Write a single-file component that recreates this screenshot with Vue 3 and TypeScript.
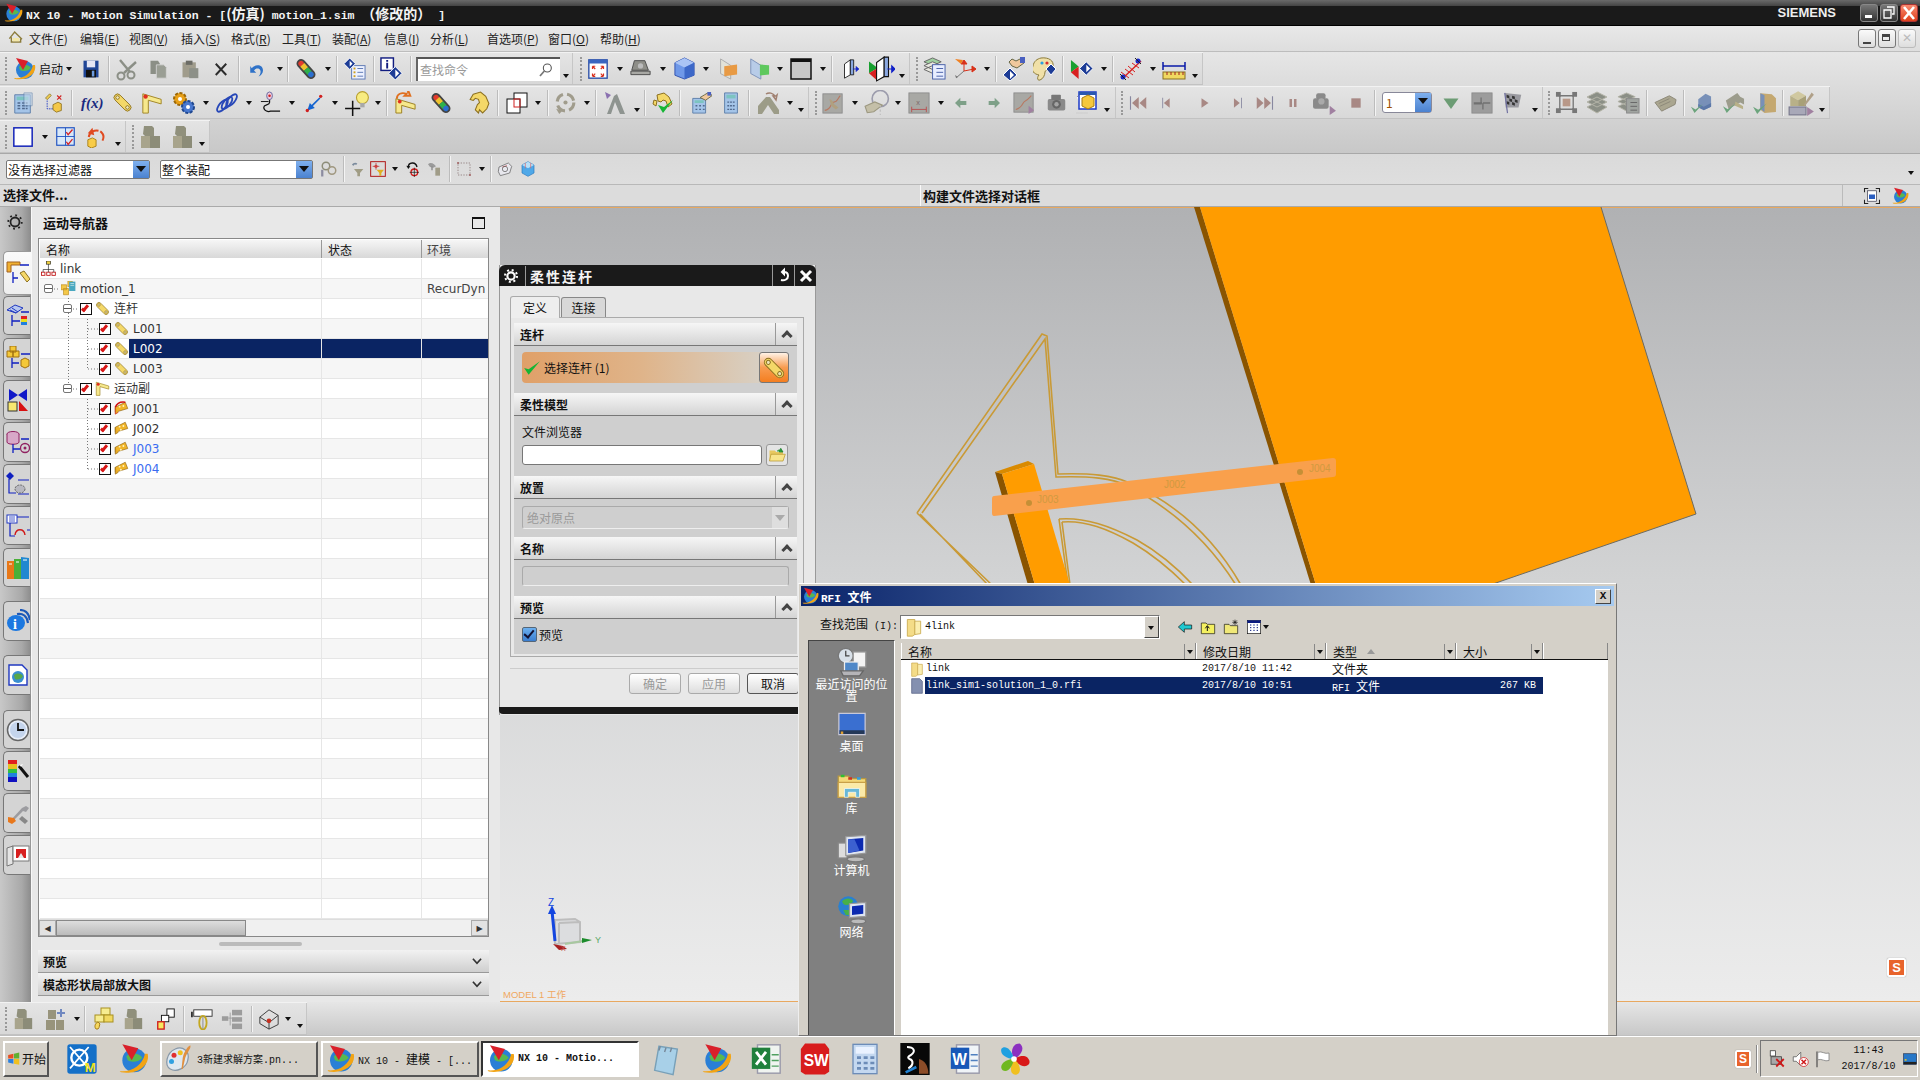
<template>
  <div class="nx">
    <!-- Title bar -->
    <header class="titlebar">
      <Ico n="nx" :s="20" class="title-logo" />
      <span class="title-text">NX 10 - Motion Simulation - [<span class="cj">(仿真)</span> motion_1.sim <span class="cj">（修改的）</span> ]</span>
      <span class="siemens">SIEMENS</span>
      <span class="win-btn">
        <svg viewBox="0 0 18 18" width="18" height="18"><rect x="5" y="11" width="7" height="3" fill="#fff" /></svg>
      </span>
      <span class="win-btn">
        <svg viewBox="0 0 18 18" width="18" height="18"><path d="M7 3h7v7h-2M4 6h7v8H4z" fill="none" stroke="#fff" stroke-width="1.300" /></svg>
      </span>
      <span class="win-btn win-close">
        <svg viewBox="0 0 18 18" width="18" height="18"><path d="M4 3l10 12M14 3L4 15" stroke="#fff" stroke-width="2.600" /></svg>
      </span>
    </header>

    <!-- Menu bar -->
    <nav class="menubar">
      <Ico n="house" :s="16" class="menu-icon" />
      <span
        v-for="m in menu"
        :key="m.label"
        class="menu-item"
        :style="{ width: m.w + 'px' }"
      >{{ m.label }}(<u>{{ m.key }}</u>)</span>
      <span class="sub-btns">
        <span class="sub-btn"><i class="sub-min"></i></span>
        <span class="sub-btn"><i class="sub-res"></i></span>
        <span class="sub-btn sub-off">✕</span>
      </span>
    </nav>

    <!-- Toolbars -->
    <section class="toolbars">
      <div v-for="(row, r) in toolbarRows" :key="r" class="tb-row">
        <div
          v-for="(group, gi) in row"
          :key="gi"
          class="tb-group"
          :style="{ width: group.w + 'px' }"
        >
          <span
            v-for="it in group.items"
            :key="it.name + it.ml + it.w"
            class="tb-item"
            :class="'k-' + it.kind"
            :style="{ marginLeft: it.ml + 'px', width: it.w + 'px' }"
          >
            <Ico v-if="it.kind === 'icon'" :n="it.name" :s="it.w" />
            <template v-else-if="it.kind === 'text'">{{ it.name }}</template>
            <template v-else-if="it.kind === 'search'">
              <span class="search-text">查找命令</span>
              <Ico n="lens" :s="16" class="search-lens" />
            </template>
            <template v-else-if="it.kind === 'spin'">
              <span class="spin-val">1</span>
              <span class="drop-arrow"></span>
            </template>
          </span>
        </div>
      </div>
    </section>

    <!-- Selection bar -->
    <section class="filterbar">
      <div class="fb-select fb-select-a"><span>没有选择过滤器</span><i class="drop-arrow"></i></div>
      <div class="fb-select fb-select-b"><span>整个装配</span><i class="drop-arrow"></i></div>
      <span
        v-for="it in filterItems"
        :key="it.name + it.ml"
        class="tb-item"
        :class="'k-' + it.kind"
        :style="{ marginLeft: it.ml + 'px', width: it.w + 'px' }"
      >
        <Ico v-if="it.kind === 'icon'" :n="it.name" :s="it.w" />
      </span>
      <i class="filter-end"></i>
    </section>

    <!-- Cue line -->
    <section class="cuebar">
      <span class="cue-left">选择文件...</span>
      <span class="cue-mid">构建文件选择对话框</span>
      <span class="cue-right">
        <Ico n="frame" :s="18" />
        <Ico n="nx" :s="18" />
      </span>
    </section>

    <!-- Main area -->
    <main class="main">
      <aside class="rail">
        <Ico n="gear" :s="18" class="rail-gear" />
        <span
          v-for="tab in railTabs"
          :key="tab.n"
          class="rail-tab"
          :class="{ 'rail-tab--active': tab.active }"
          :style="{ marginTop: tab.mt + 'px', height: tab.h + 'px' }"
        >
          <Ico :n="tab.n" :s="24" />
        </span>
      </aside>

      <section class="navigator">
        <div class="nav-head">
          <span>运动导航器</span>
          <i class="nav-max"></i>
        </div>
        <div class="tree">
          <div class="tree-header">
            <span class="col-name">名称</span>
            <span class="col-state">状态</span>
            <span class="col-env">环境</span>
          </div>
          <div class="tree-body">
            <svg class="tree-dots" viewBox="0 0 120 220" width="120" height="220">
              <path
                d="M28.500 39V130M47.500 60V110M47.500 140V210M14 30h6M33 50h6M33 130h6M48 70h10M48 90h10M48 110h10M48 150h10M48 170h10M48 190h10M48 210h10"
                stroke="#777"
                fill="none"
                stroke-dasharray="1 2"
              />
            </svg>
            <div
              v-for="(t, i) in treeRows"
              :key="i"
              class="tree-row"
              :class="{ 'tree-row--alt': i % 2 === 1, 'tree-row--sel': t.sel }"
            >
              <div class="col-name" :style="{ paddingLeft: t.pad + 'px' }">
                <i v-if="t.tog" class="tog"></i>
                <i v-if="t.chk" class="chk"></i>
                <Ico v-if="t.icon" :n="t.icon" :s="15" class="tree-icon" />
                <span class="tree-label" :class="{ 'tree-label--blue': t.blue }">{{ t.label }}</span>
              </div>
              <div class="col-state"></div>
              <div class="col-env">{{ t.env }}</div>
            </div>
          </div>
          <div class="hscroll">
            <span class="sb-btn">◀</span>
            <span class="sb-thumb"></span>
            <span class="sb-track"></span>
            <span class="sb-btn">▶</span>
          </div>
        </div>
        <div class="splitter"><i></i></div>
        <div class="nav-sect"><span>预览</span><Ico n="chevd" :s="14" /></div>
        <div class="nav-sect"><span>模态形状局部放大图</span><Ico n="chevd" :s="14" /></div>
      </section>

      <section class="viewport">
        <svg class="scene" viewBox="500 206 1420 796" width="1420" height="796">
          <polygon points="1194,206 1200,206 1316,584 1311,584" fill="#8a5400" />
          <polygon points="1200,206 1601,206 1696,513 1490,584 1316,584" fill="#ff9c00" />
          <path d="M1601 206L1696 513L1490 584" fill="none" stroke="#6c6a60" />
          <g fill="none" stroke="#c99a36" stroke-width="1.600">
            <path d="M917 512L1042 333L1047 335L1058 473C1090 472 1112 474 1130 482C1170 500 1210 530 1241 584" />
            <path d="M922 512L1045 338L1056 476C1090 475 1112 477 1128 485C1165 504 1205 535 1236 584" />
            <path d="M917 512L992 584M920 513L988 584" />
            <path d="M1059 518C1085 516 1110 525 1137 539C1160 552 1180 570 1193 584" />
            <path d="M1062 521C1085 519 1108 528 1133 542C1155 555 1172 570 1186 584" />
            <path d="M1059 518L1068 584M1062 521L1070 584" />
          </g>
          <polygon points="995,471 1028,460 1034,463 1002,473" fill="#d98a00" />
          <polygon points="995,471 1002,473 1035,584 1028,584" fill="#8a5400" />
          <polygon points="1002,473 1034,463 1070,584 1035,584" fill="#ff9c00" />
          <path d="M994 495L1333 457Q1336 457 1336 460V473Q1336 476 1333 476L994 515Q992 515 992 512V498Q992 495 994 495Z" fill="#f9a04c" />
          <circle cx="1029" cy="502" r="3" fill="#c58f36" />
          <circle cx="1300" cy="471" r="3" fill="#c58f36" />
          <g font-family="Liberation Sans, sans-serif" font-size="10" fill="#d09a40">
            <text x="1037" y="502">J003</text>
            <text x="1164" y="487">J002</text>
            <text x="1309" y="471">J004</text>
          </g>
          <g fill="none">
            <path d="M555 919l20-1 5 3v20l-25 2zM559 922l21-1M559 922v21" fill="#dcdddf" stroke="#bdbdbd" stroke-width="2" />
            <path d="M565 943l18-3" stroke="#a8c8a0" stroke-width="2" />
            <path d="M555 940l-3-30" stroke="#1446e0" stroke-width="3" />
            <path d="M548 913l4-9 4 9z" fill="#1446e0" />
            <path d="M553 943l10 2 4 3-8 1z" fill="#a82020" />
            <path d="M582 937l10 2-10 3z" fill="#1c8c2c" />
          </g>
          <text x="548" y="905" font-family="Liberation Sans, sans-serif" font-size="10" fill="#1446e0">Z</text>
          <text x="595" y="942" font-family="Liberation Sans, sans-serif" font-size="9" fill="#5aa868">Y</text>
          <text x="561" y="950" font-family="Liberation Sans, sans-serif" font-size="7" fill="#c05050">X</text>
          <text x="503" y="997" font-family="Liberation Sans, Noto Sans CJK SC, sans-serif" font-size="9.500" fill="#f0a860">MODEL 1 工作</text>
        </svg>
        <span class="sogou">S</span>
      </section>
    </main>

    <!-- Bottom toolbar -->
    <section class="bottombar">
      <div class="tb-group bottom-group">
        <span
          v-for="it in bottomItems"
          :key="it.name + it.ml"
          class="tb-item"
          :class="'k-' + it.kind"
          :style="{ marginLeft: it.ml + 'px', width: it.w + 'px' }"
        >
          <Ico v-if="it.kind === 'icon'" :n="it.name" :s="it.w" />
        </span>
      </div>
    </section>

    <!-- Taskbar -->
    <footer class="taskbar">
      <span class="start"><Ico n="winflag" :s="14" />开始</span>
      <Ico n="qm" :s="32" class="tk-qm" />
      <Ico n="nx" :s="32" class="tk-nx" />
      <span class="tk-btn tk-btn-a"><Ico n="paint" :s="30" /><span class="tk-text">3新建求解方案.pn...</span></span>
      <span class="tk-btn tk-btn-b"><Ico n="nx" :s="30" /><span class="tk-text">NX 10 - <span class="cj">建模</span> - [...</span></span>
      <span class="tk-btn tk-btn-c"><Ico n="nx" :s="30" /><span class="tk-text tk-text--bold">NX 10 - Motio...</span></span>
      <span class="tk-apps">
        <Ico v-for="a in taskApps" :key="a.k" :n="a.n" :s="a.s" :style="{ marginLeft: a.ml + 'px' }" />
      </span>
      <span class="tk-sogou">S</span>
      <i class="tk-sep"></i>
      <span class="tray">
        <Ico n="traynet" :s="18" />
        <Ico n="traysound" :s="18" />
        <Ico n="trayflag" :s="18" />
        <span class="clock"><span>11:43</span><span>2017/8/10</span></span>
        <Ico n="traydesk" :s="14" />
      </span>
    </footer>

    <!-- Flexible link dialog -->
    <div class="flex-dialog">
      <div class="fd-title">
        <Ico n="gearw" :s="16" class="fd-gear" />
        <span class="fd-name">柔性连杆</span>
        <span class="fd-tool">
          <svg viewBox="0 0 18 18" width="18" height="18"><path d="M6 13c4 1 7-1 7-4s-2-4-4-4M9 3v4l-2-2z" fill="none" stroke="#fff" stroke-width="2" /></svg>
        </span>
        <span class="fd-tool">
          <svg viewBox="0 0 18 18" width="18" height="18"><path d="M4 4l10 10M14 4L4 14" stroke="#fff" stroke-width="3" /></svg>
        </span>
      </div>
      <div class="fd-body">
        <div class="fd-tabs">
          <span class="fd-tab fd-tab--on">定义</span>
          <span class="fd-tab">连接</span>
        </div>
        <div class="fd-pane">
          <div class="fd-head"><b>连杆</b><i class="fd-chev"></i></div>
          <div class="fd-sec fd-sec-link">
            <div class="fd-select-bar">
              <svg viewBox="0 0 16 16" width="18" height="18"><path d="M1 8l4 6 10-12-10 7z" fill="#15b535" /></svg>
              <span>选择连杆 (1)</span>
              <span class="fd-pick"><Ico n="pin" :s="24" /></span>
            </div>
          </div>
          <div class="fd-head"><b>柔性模型</b><i class="fd-chev"></i></div>
          <div class="fd-sec fd-sec-model">
            <div class="fd-label">文件浏览器</div>
            <div class="fd-input-row">
              <span class="fd-input"></span>
              <span class="fd-browse"><Ico n="openfolder" :s="18" /></span>
            </div>
          </div>
          <div class="fd-head"><b>放置</b><i class="fd-chev"></i></div>
          <div class="fd-sec fd-sec-place">
            <div class="fd-disabled">
              <span>绝对原点</span>
              <i class="fd-disabled-arrow"></i>
            </div>
          </div>
          <div class="fd-head"><b>名称</b><i class="fd-chev"></i></div>
          <div class="fd-sec fd-sec-name"><div class="fd-name-input"></div></div>
          <div class="fd-head"><b>预览</b><i class="fd-chev"></i></div>
          <div class="fd-sec fd-sec-prev">
            <i class="fd-check"></i>
            <span>预览</span>
          </div>
        </div>
        <div class="fd-actions">
          <span class="fd-btn fd-btn--off">确定</span>
          <span class="fd-btn fd-btn--off">应用</span>
          <span class="fd-btn">取消</span>
        </div>
      </div>
      <div class="fd-foot"></div>
    </div>

    <!-- RFI file dialog -->
    <div class="rfi">
      <div class="rfi-title">
        <Ico n="nx" :s="18" />
        <span class="rfi-name">RFI <span class="cj">文件</span></span>
        <span class="rfi-close">X</span>
      </div>
      <div class="rfi-look">
        <span class="rfi-look-label"><span class="cj">查找范围</span> (I):</span>
        <div class="rfi-combo">
          <Ico n="folder" :s="20" />
          <span>4link</span>
          <i class="rfi-combo-btn"></i>
        </div>
        <Ico n="backarrow" :s="16" class="rfi-t1" />
        <Ico n="upfolder" :s="16" class="rfi-t2" />
        <Ico n="newfolder" :s="16" class="rfi-t2" />
        <Ico n="viewgrid" :s="16" class="rfi-t2" />
        <i class="rfi-view-caret"></i>
      </div>
      <div class="rfi-main">
        <aside class="rfi-side">
          <div v-for="s in places" :key="s.label" class="place">
            <Ico :n="s.n" :s="30" />
            <span>{{ s.label }}</span>
          </div>
        </aside>
        <div class="rfi-list">
          <div class="list-head">
            <span class="lh lh-name"><span class="cj">名称</span><i class="lh-btn"></i></span>
            <span class="lh lh-date"><span class="cj">修改日期</span><i class="lh-btn"></i></span>
            <span class="lh lh-type"><span class="cj">类型</span><i class="lh-sort"></i><i class="lh-btn"></i></span>
            <span class="lh lh-size"><span class="cj">大小</span><i class="lh-btn"></i></span>
            <span class="lh lh-rest"></span>
          </div>
          <div class="file-row">
            <Ico n="folder" :s="16" class="file-icon" />
            <div class="file-cells">
              <span class="fc-name">link</span>
              <span class="fc-date">2017/8/10 11:42</span>
              <span class="fc-type cj">文件夹</span>
              <span class="fc-size"></span>
            </div>
          </div>
          <div class="file-row">
            <Ico n="rfifile" :s="16" class="file-icon" />
            <div class="file-cells file-cells--sel">
              <span class="fc-name">link_sim1-solution_1_0.rfi</span>
              <span class="fc-date">2017/8/10 10:51</span>
              <span class="fc-type">RFI <span class="cj">文件</span></span>
              <span class="fc-size">267 KB</span>
            </div>
          </div>
        </div>
      </div>
    </div>
  </div>
</template>

<script setup lang="ts">
import { h } from 'vue';

// icon bodies, all in a 24x24 box
const g1 = '#8b8f86';
const g2 = '#a09c8c';
const icons: Record<string, string> = {
  nx: '<circle cx="13" cy="13" r="9" fill="#2a7fd6"/><path d="M7 10c3-3 9-3 12 1-2 3-8 4-11 2z" fill="#58b850"/><path d="M4 1l12 3-5 9z" fill="#d9202a"/><path d="M23 8c2 9-8 16-20 14l-1-1c9 1 17-4 19-13z" fill="#f2a414"/>',
  house: '<path d="M2 13L10 3l11 11M5 11v7h14v-5" fill="none" stroke="#8c7c3c" stroke-width="2"/><path d="M7 12h10v5H7z" fill="#f4e8a8"/>',
  save: '<rect x="3" y="2" width="18" height="20" fill="#1f4596"/><rect x="7" y="2" width="10" height="8" fill="#e4e6f4"/><rect x="6" y="13" width="12" height="9" fill="#111"/><rect x="13" y="14" width="3" height="7" fill="#6c9ce0"/>',
  scissors: `<path d="M5 3l10 12M21 5L9 16" stroke="${g1}" stroke-width="2.400"/><circle cx="6" cy="19" r="3.500" fill="none" stroke="${g1}" stroke-width="2"/><circle cx="16" cy="18" r="3.500" fill="none" stroke="${g1}" stroke-width="2"/>`,
  copy: `<path d="M3 2h9l2 3v13H3z" fill="${g1}"/><path d="M10 7h9l3 3v13H10z" fill="#9a9e94" stroke="#d6d6d6"/>`,
  paste: `<rect x="3" y="4" width="16" height="18" fill="${g2}"/><rect x="7" y="2" width="8" height="5" fill="#6c6c66"/><rect x="11" y="11" width="11" height="12" fill="#8d9088"/>`,
  del: '<path d="M5 5l14 15M19 5L5 20" stroke="#2c2c2c" stroke-width="2.600"/>',
  undo: '<path d="M5 11c5-6 15-5 15 3 0 4-3 7-6 8 3-3 4-8 1-10-2-1-5-1-7 2l3 3H3V8z" fill="#2f72c8"/>',
  rainbow: '<g transform="rotate(48 12 12)"><rect x="-1" y="7" width="26" height="10" rx="5" fill="#444"/><rect x="1" y="9" width="6" height="6" rx="3" fill="#e23b2e"/><rect x="6" y="9" width="6" height="6" fill="#eec22e"/><rect x="12" y="9" width="6" height="6" fill="#2fb04c"/><rect x="17" y="9" width="6" height="6" rx="3" fill="#2a6fd0"/></g>',
  infolist: '<rect x="9" y="9" width="14" height="14" fill="#eef2ff" stroke="#5c78b4"/><path d="M15 12h6M15 16h6M15 20h6" stroke="#5c78b4"/><rect x="11" y="11" width="2" height="2" fill="#d0a020"/><rect x="11" y="15" width="2" height="2" fill="#d0a020"/><rect x="11" y="19" width="2" height="2" fill="#d0a020"/><path d="M7 1l6 6-6 6-6-6z" fill="#1d3c96" stroke="#fff"/><path d="M7 4v6l3-3z" fill="#fff"/>',
  infodia: '<rect x="1" y="1" width="13" height="13" fill="#fff" stroke="#111c80" stroke-width="1.500"/><path d="M6.500 3h2v2h-2zM6.500 6h2v6h-2z" fill="#111c80"/><path d="M16 10l7 7-7 7-7-7z" fill="#1d3c96" stroke="#fff"/><path d="M16 13v8l4-4z" fill="#fff"/>',
  fit: '<rect x="2" y="2" width="20" height="20" fill="#fff" stroke="#2a4fa8" stroke-width="1.500"/><rect x="2" y="2" width="20" height="4" fill="#3a66c0"/><path d="M6 9l3 3M6 9h3M6 9v3M18 9l-3 3M18 9h-3M18 9v3M6 20l3-3M6 20h3M6 20v-3M18 20l-3-3M18 20h-3M18 20v-3" stroke="#d8301e" stroke-width="1.300" fill="none"/>',
  laptop: '<path d="M5 3h12l4 11H2z" fill="#8e8e88" stroke="#444"/><path d="M1 15h22v4H1z" fill="#a8a8a4" stroke="#444"/><circle cx="12" cy="9" r="3" fill="#bbb"/>',
  cube: '<path d="M12 1l10 5v13l-10 4-10-4V6z" fill="#6f98e8" stroke="#3354b0"/><path d="M2 6l10 5 10-5-10-5z" fill="#aac4f5"/><path d="M12 11v12l10-4V6z" fill="#3d68c8"/>',
  cutO: '<path d="M5 1l11 7v15L5 17z" fill="#e2e2d8" stroke="#aaa"/><path d="M9 9l14-2v11l-14 2z" fill="#e89a44"/>',
  cutG: '<path d="M3 1l11 7v15L3 17z" fill="#b8cce8" stroke="#7a8fb8"/><path d="M13 7l10 1v10l-10 1z" fill="#5ec85e"/>',
  blackrect: '<rect x="2" y="2" width="20" height="20" fill="#c8c8c8" stroke="#111" stroke-width="1.500"/><rect x="2" y="2" width="20" height="3" fill="#111"/>',
  pageA: '<path d="M3 6l7-5v18l-7 4z" fill="#fff" stroke="#111"/><path d="M10 1h4v18h-4z" fill="#8aa8e0" stroke="#111"/><path d="M13 12h7M20 12l-3-3v6z" stroke="#1020c8" fill="#1020c8"/>',
  pageB: '<path d="M0 5l8 6-8 5z" fill="#18a030"/><path d="M0 16l8-5v12z" fill="#d82020"/><path d="M7 6l7-5v18l-7 4z" fill="#fff" stroke="#111"/><path d="M14 1h4v18h-4z" fill="#8aa8e0" stroke="#111"/><path d="M17 12h7M24 12l-3-3v6z" stroke="#1020c8" fill="#1020c8"/>',
  stack: '<path d="M1 5l9-4 9 4-9 4z" fill="#a0d0a0" stroke="#666"/><path d="M1 9l9-4 9 4-9 4zM1 13l9-4 9 4-9 4z" fill="#e8e8e0" stroke="#666"/><rect x="10" y="8" width="13" height="15" fill="#e8eeff" stroke="#4860a8"/><path d="M14 12h7M14 16h7M14 20h7" stroke="#4860a8"/>',
  triad: '<path d="M11 14V4M8 7l3-4 3 4z" stroke="#d83018" fill="#d83018"/><path d="M11 14l-8 7" stroke="#777"/><path d="M11 14l10-2M19 9l4 3-4 3z" stroke="#d83018" fill="#d83018"/><path d="M2 2l8 1-2 4z" fill="#f08020"/><path d="M3 21l-1-3 3 2z" fill="#777"/>',
  handdia: '<path d="M10 2l4 2 6-3 2 5-7 5-5-2-3-4z" fill="#f0c89c" stroke="#664"/><rect x="18" y="0" width="5" height="6" fill="#4a60c0"/><path d="M8 11l7 7-7 6-7-6z" fill="#1d3c96" stroke="#fff"/><path d="M8 14v8l4-4z" fill="#fff"/>',
  palette: '<path d="M8 1c8-1 13 3 12 8-1 4-8 3-8 6 0 3-2 7-5 8s-3-3-1-5c-5-1-8-4-6-9 1-5 4-7 8-8z" fill="#f0e0a8" stroke="#8c7c3c"/><circle cx="9" cy="6" r="1.600" fill="#2aa0e0"/><circle cx="14" cy="6" r="1.600" fill="#d83030"/><path d="M18 7l5 5-5 6-5-6z" fill="#1d3c96" stroke="#fff"/>',
  playdia: '<path d="M1 3l8 7-8 6z" fill="#18a030"/><path d="M1 16l8-6v13z" fill="#d82020"/><path d="M17 5l7 7-7 7-7-7z" fill="#1d3c96" stroke="#fff"/><path d="M17 8v8l4-4z" fill="#fff"/>',
  antenna: '<path d="M4 21L22 4" stroke="#d82020" stroke-width="1.400"/><path d="M2 15l8 6M6 12l8 6M9 9l7 6M13 6l7 5" stroke="#d82020"/><circle cx="4" cy="20" r="2.500" fill="#1828c8"/><circle cx="19" cy="4" r="2.500" fill="#1828c8"/><path d="M1 17l6 6M16 1l6 6" stroke="#222"/>',
  ruler: '<path d="M1 5v8M23 5v8" stroke="#0a1aa8" stroke-width="1.500"/><path d="M1 9h22" stroke="#0a1aa8" stroke-width="1.500"/><rect x="1" y="15" width="22" height="7" fill="#f0d860" stroke="#887020"/><path d="M5 15v3M9 15v3M13 15v3M17 15v3M21 15v3" stroke="#a02020"/>',
  calc: '<path d="M3 3h17v20H3z" fill="#a4c4e8" stroke="#5c7ea8"/><rect x="5" y="5" width="13" height="4" fill="#7cc4c0"/><path d="M6 12h3M11 12h3M15 12h2M6 15h3M11 15h3M15 15h2M6 18h3M11 18h3M15 18h2" stroke="#50688c" stroke-width="1.600"/><path d="M13 1h9v14h-9z" fill="#c4d8ec" stroke="#5c7ea8" opacity=".6"/>',
  linkx: '<path d="M3 6l5-5 2 2-5 5z" fill="#f0cc50" stroke="#8c7c3c"/><path d="M5 9v10h9" fill="none" stroke="#2038c0" stroke-dasharray="2 1"/><path d="M12 14l6-3 4 2v8l-6 2-4-3z" fill="#f4c848" stroke="#8c7020"/><path d="M17 3l5 5M22 3l-5 5" stroke="#d02020" stroke-width="1.300"/>',
  fx: '<text x="1" y="17" font-family="Liberation Serif, serif" font-style="italic" font-weight="700" font-size="15" fill="#1a2a80">f(x)</text>',
  pin: '<g transform="rotate(45 12 12)"><rect x="0" y="8" width="24" height="8" rx="4" fill="#f4d868" stroke="#8c7020"/><circle cx="4" cy="12" r="2" fill="#ece4b8" stroke="#8c7020"/><circle cx="20" cy="12" r="2" fill="#ece4b8" stroke="#8c7020"/></g>',
  lshape: '<path d="M2 2l20 6v5L8 9v14H2z" fill="#f6e88c" stroke="#9c8020"/><circle cx="5" cy="5" r="2.400" fill="#e03020"/>',
  gears: '<circle cx="8" cy="8" r="6" fill="#e8a018" stroke="#9c6808" stroke-dasharray="3 1.500" stroke-width="2"/><circle cx="8" cy="8" r="2" fill="#fff"/><circle cx="16" cy="16" r="6" fill="#4878d0" stroke="#204890" stroke-dasharray="3 1.500" stroke-width="2"/><circle cx="16" cy="16" r="2" fill="#fff"/>',
  spring: '<g fill="none" stroke="#2848b8" stroke-width="2"><ellipse cx="7" cy="15" rx="3.500" ry="8" transform="rotate(40 7 15)"/><ellipse cx="12" cy="12" rx="3.500" ry="8" transform="rotate(40 12 12)"/><ellipse cx="17" cy="9" rx="3.500" ry="8" transform="rotate(40 17 9)"/></g>',
  wire: '<path d="M11 4v8c0 3-6 2-6 5 0 4 5 5 7 4h10" fill="none" stroke="#111" stroke-width="1.300"/><path d="M2 11h8" stroke="#111"/><ellipse cx="11" cy="5" rx="3" ry="4" fill="#ecd" stroke="#6868a0"/><circle cx="11" cy="5" r="1.300" fill="#d02020"/>',
  arrowb: '<path d="M4 21L19 6" stroke="#1464d0" stroke-width="2" stroke-dasharray="12 0"/><path d="M4 21l3-9 6 6z" fill="#1464d0"/><circle cx="20" cy="4" r="2" fill="#d02020"/><circle cx="4" cy="21" r="2" fill="#d02020"/>',
  bulb: '<path d="M1 17h14M8 10v14" stroke="#111" stroke-width="1.400"/><circle cx="17" cy="7" r="5.500" fill="#f8ec80" stroke="#b8a030"/><rect x="15" y="12" width="4" height="4" fill="#a8a8a8"/>',
  lshape2: '<path d="M2 8l20 6v5L8 15v8H2z" fill="#f6e88c" stroke="#9c8020"/><path d="M3 8C3 3 8 1 13 3l-2 2 6 0-2-5-1 2" fill="none" stroke="#e07020" stroke-width="2"/><circle cx="6" cy="11" r="2" fill="#e03020"/>',
  chain: '<path d="M6 4l7-2 5 4 3 7-2 5-4 4-3-3-1 3-3-3 2-5 2-2-1-3-3-1-2 2-3-1z" fill="#f4d868" stroke="#8c7020"/>',
  rects: '<rect x="9" y="2" width="13" height="14" fill="#fff" stroke="#111"/><rect x="2" y="8" width="13" height="14" fill="#fff" stroke="#111"/><rect x="9" y="8" width="6" height="8" fill="none" stroke="#d02020"/>',
  ring: `<circle cx="12" cy="12" r="8" fill="none" stroke="${g2}" stroke-width="3" stroke-dasharray="9 4"/><circle cx="12" cy="12" r="2" fill="${g2}"/><path d="M3 18l3 5 3-3z" fill="${g2}"/>`,
  bar: `<path d="M4 23l7-18 3-2 8 20h-5l-5-12-4 12z" fill="#8e9490"/><path d="M2 1l6 3-4 4z" fill="#8a70b0"/>`,
  chaincheck: '<path d="M6 4l7-2 5 4 3 7-4 3-2-6-3-1-2 2-3-1zM3 9l3 1-1 5-3-2z" fill="#f4d868" stroke="#8c7020"/><path d="M7 14l5 8L22 9l-9 7z" fill="#15b535"/>',
  calchand: '<path d="M3 7h14v16H3z" fill="#a4c4e8" stroke="#5c7ea8"/><rect x="5" y="9" width="10" height="3" fill="#7cc4c0"/><path d="M6 15h2M10 15h2M14 15h2M6 19h2M10 19h2M14 19h2" stroke="#50688c" stroke-width="1.500"/><path d="M11 6l5-3 5-3 3 4-7 5z" fill="#f0c89c" stroke="#664"/><rect x="19" y="0" width="4" height="4" fill="#4a60c0"/>',
  calc2: '<path d="M5 1h14v22H5z" fill="#a4c4e8" stroke="#5c7ea8"/><rect x="7" y="3" width="10" height="4" fill="#7cc4c0"/><path d="M8 11h2M11 11h2M14 11h2M8 15h2M11 15h2M14 15h2M8 19h2M11 19h2M14 19h2" stroke="#50688c" stroke-width="1.500"/>',
  grayl: '<path d="M2 23V15L10 6l4 0 9 13v4h-5l-6-9-6 9z" fill="#9c9c88"/><path d="M10 3c3-2 7-1 9 2l-2 0 3 4 1-5-1 1" fill="none" stroke="#a08070" stroke-width="1.500"/>',
  plot: '<rect x="1" y="2" width="21" height="21" fill="#a8a8a4" stroke="#8c8c8c"/><path d="M3 20c8-1 6-9 10-9s4-4 7-7" fill="none" stroke="#b87860" stroke-width="1.200"/><path d="M8 8c3 0 5 4 5 5l5 4-3 2-5-4z" fill="#b0a080"/>',
  tag: '<circle cx="15" cy="8" r="7.500" fill="none" stroke="#9c9cac" stroke-width="1.500"/><path d="M1 15l9-4 7 3-8 6-6 1z" fill="#c4bfa8" stroke="#9c9880"/><path d="M15 14v9" stroke="#bbb" stroke-dasharray="2 2"/>',
  xplot: '<rect x="1" y="1" width="22" height="22" fill="#a8a8a4" stroke="#8c8c8c"/><path d="M4 19h16M4 16v6M20 16v6" stroke="#b85050"/><text x="9" y="14" font-family="Liberation Sans, sans-serif" font-size="8" fill="#7c6868">x</text>',
  arrowl: '<path d="M3 12l8-8v5h9v6h-9v5z" fill="#7ea088"/>',
  arrowr: '<path d="M21 12l-8-8v5H4v6h9v5z" fill="#7ea088"/>',
  plot2: '<rect x="1" y="1" width="21" height="21" fill="#a8a8a4" stroke="#8c8c8c"/><path d="M3 19c8-2 7-8 10-9s5-4 7-6" fill="none" stroke="#b87860" stroke-width="1.200"/><path d="M17 15l6 5-6 4z" fill="#a080a0"/>',
  camera: '<rect x="2" y="8" width="20" height="13" rx="2" fill="#8a8a8a"/><rect x="6" y="3" width="11" height="6" rx="1" fill="#777"/><circle cx="12" cy="14" r="5" fill="#666"/><circle cx="12" cy="14" r="2.500" fill="#a4a4a4"/>',
  cubesel: '<path d="M3 6l4-4h13v15H7" fill="#fff" stroke="#999" stroke-dasharray="2 1"/><rect x="5" y="1" width="17" height="17" fill="#fff" stroke="#1c3ac8" stroke-width="1.500"/><rect x="5" y="1" width="17" height="3" fill="#2a58b0"/><path d="M14 4l6 3v8l-6 3-6-3V7z" fill="#f6c83c" stroke="#a87c10"/><path d="M2 22h12" stroke="#ccc"/>',
  first: '<path d="M2 3v18" stroke="#8888a0" stroke-width="1.500"/><path d="M13 4v16l-9-8zM23 4v16l-9-8z" fill="#a88884"/>',
  prev: '<path d="M8 3v18" stroke="#8888a0" stroke-width="1.500"/><path d="M20 4v16l-10-8z" fill="#a88884"/>',
  play: '<path d="M6 4v16l12-8z" fill="#a88884"/>',
  next: '<path d="M18 3v18" stroke="#8888a0" stroke-width="1.500"/><path d="M5 4v16l10-8z" fill="#a88884"/>',
  last: '<path d="M22 3v18" stroke="#8888a0" stroke-width="1.500"/><path d="M1 4v16l9-8zM11 4v16l9-8z" fill="#a88884"/>',
  pause: '<path d="M5 4h5v16H5zM14 4h5v16h-5z" fill="#a88884"/>',
  camplay: '<rect x="1" y="8" width="15" height="10" rx="2" fill="#8a8a8a"/><rect x="4" y="3" width="9" height="6" rx="2" fill="#8a8a8a"/><circle cx="9" cy="11" r="3" fill="#aaa"/><path d="M17 15l6 5-6 4z" fill="#a080a0"/>',
  stop: '<rect x="4" y="4" width="16" height="16" fill="#a88884"/>',
  tridown: '<path d="M2 6h20L12 20z" fill="#6c9c74"/>',
  box: '<rect x="1" y="1" width="22" height="22" fill="#9c9c9c" stroke="#8c8c8c"/><path d="M3 13h8v-7M3 12h9M13 12h8M13 12v7" stroke="#707070" stroke-width="1.400" fill="none"/>',
  flag: '<path d="M3 1l18 2-3 14H4z" fill="#9a9aa0"/><path d="M5 3l3 1v3l-3-1zM11 4l3 1v3l-3-1zM8 7l3 1v3L8 10zM14 8l3 1v3l-3-1zM5 10l3 1v3l-3-1zM11 11l3 1v3l-3-1z" fill="#333"/><path d="M3 1l3 22" stroke="#7070a0" stroke-width="1.300"/>',
  node: '<path d="M5 5h14v14H5z" fill="none" stroke="#777" stroke-width="1.400"/><rect x="1" y="1" width="5" height="5" fill="#777"/><rect x="18" y="1" width="5" height="5" fill="#777"/><rect x="1" y="18" width="5" height="5" fill="#777"/><rect x="18" y="18" width="5" height="5" fill="#777"/><rect x="8" y="8" width="8" height="8" fill="#b89888"/>',
  layers: `<path d="M2 6l10-5 10 5-10 5zM2 11l10-5 10 5-10 5zM2 16l10-5 10 5-10 6z" fill="${g1}" stroke="#b4b4a8"/>`,
  layerlist: `<path d="M1 6l9-4 9 4-9 4zM1 11l9-4 9 4-9 4zM1 16l9-4 9 4-9 5z" fill="${g1}" stroke="#b4b4a8"/><rect x="10" y="8" width="13" height="15" fill="#a0a4a0" stroke="#8a8a8a"/><path d="M14 12h7M14 16h7M14 20h7" stroke="#666"/>`,
  tag2: '<path d="M1 12l15-7 7 4-1 5-14 7z" fill="#aaa690" stroke="#8c8878"/><path d="M5 13l11-5M6 16l11-5" stroke="#8c8878"/>',
  checka: '<path d="M9 8l8-6 6 3v11l-7 3-7-3z" fill="#7890b8"/><path d="M9 13l6 3 8-4v4l-8 4-6-3z" fill="#5c78a8"/><path d="M1 16l4 7L14 13l-8 6z" fill="#6ca47c"/>',
  checkb: '<path d="M4 10l12-8 3 4 4 2v6l-4-2-9 5-3 2z" fill="#9c9c8c"/><path d="M14 11l8 5v3l-9-4z" fill="#b8b088"/><path d="M1 16l4 7L14 13l-8 6z" fill="#6ca47c"/>',
  checkc: '<path d="M8 3l11 1 4 4v13l-11 1-4-3z" fill="#c4a870"/><path d="M8 3l4 2v16l-4-3z" fill="#7890b8"/><path d="M1 16l4 7L14 13l-8 6z" fill="#6ca47c"/>',
  abc: '<path d="M2 6l7-4 7 4-7 4z" fill="#d0c8a0"/><path d="M2 6l7 4v5H2z" fill="#b8b088"/><path d="M9 10l7-4v9H9z" fill="#a8a078"/><path d="M14 14l7-11 2 2-8 10z" fill="#b0a088"/><rect x="1" y="16" width="15" height="7" fill="#a8a8b8" stroke="#77778c"/><path d="M17 16l6 4-6 4z" fill="#a080a0"/>',
  square: '<rect x="2" y="2" width="20" height="20" fill="#fff" stroke="#1020b8" stroke-width="1.600"/>',
  gridcheck: '<rect x="2" y="2" width="20" height="20" fill="#d8e8f8" stroke="#1c50c0" stroke-width="1.300"/><path d="M12 2v20M2 12h20" stroke="#1c50c0"/><path d="M13 7l2 3 5-6M13 18l2 3 5-6" stroke="#d82020" fill="none" stroke-width="1.500"/>',
  rotate: '<path d="M3 12c1-7 10-9 14-5 3 3 2 7 1 9" fill="none" stroke="#e04a20" stroke-width="2.200" stroke-dasharray="14 2"/><path d="M7 2l-5 6 7 2z" fill="#e04a20"/><path d="M2 15l5-2 4 2v7l-5 2-4-2z" fill="#f8cc48" stroke="#a88018"/>',
  blocks: '<path d="M6 1h8l2 2v8h-9l-2-2z" fill="#90907c"/><path d="M3 11h9v12H3z" fill="#a8a48c"/><path d="M12 11h10v12H12z" fill="#8c8c78"/>',
  blocksplus: '<path d="M5 3h8v9H5zM3 13h9v10H3zM13 13h8v10h-8z" fill="#98947c"/><path d="M18 2v8M14 6h8" stroke="#7088c0" stroke-width="2"/>',
  keyy: '<rect x="10" y="1" width="9" height="7" fill="#f6ec90" stroke="#a89020"/><rect x="4" y="8" width="9" height="7" fill="#f6ec90" stroke="#a89020"/><rect x="13" y="8" width="9" height="7" fill="#f0d860" stroke="#a89020"/><path d="M5 22c-2-2-1-6 2-7l2 2c-1 1 0 3-2 5z" fill="#f6d860" stroke="#a88018"/>',
  stairs: '<rect x="13" y="1" width="8" height="9" fill="#fff" stroke="#111"/><rect x="7" y="8" width="8" height="7" fill="#fff" stroke="#111"/><rect x="3" y="15" width="7" height="8" fill="#f8e860" stroke="#d02020" stroke-width="1.500"/>',
  ringrect: '<rect x="3" y="2" width="20" height="7" fill="#fff" stroke="#333"/><path d="M1 4v6" stroke="#333" stroke-width="2"/><ellipse cx="13" cy="16" rx="4" ry="7.500" fill="none" stroke="#c4a820" stroke-width="2"/><path d="M13 9v14" stroke="#888"/>',
  treeg: '<rect x="12" y="2" width="11" height="6" fill="#9c9c9c"/><rect x="12" y="10" width="11" height="5" fill="#9c9c9c"/><rect x="12" y="17" width="11" height="6" fill="#9c9c9c"/><rect x="1" y="9" width="7" height="5" fill="#9c9c9c"/><path d="M8 11h4M10 5v14" stroke="#9c9c9c"/>',
  cubewire: '<path d="M2 10l10-8 10 6v10l-10 5-10-6z" fill="none" stroke="#333"/><path d="M2 10l10 6 10-8M12 16v7" stroke="#333" fill="none"/><circle cx="12" cy="14" r="2.500" fill="#c83020"/>',
  chaingray: '<circle cx="8" cy="8" r="5" fill="none" stroke="#8c8c78" stroke-width="2"/><circle cx="16" cy="14" r="5" fill="none" stroke="#a09880" stroke-width="2"/><path d="M3 13v9" stroke="#8c8ca0" stroke-width="3"/>',
  filter: '<path d="M3 6c0-3 6-5 8-2l-2 2c-1-1-3-1-3 1z" fill="#7a8a9c"/><path d="M6 12h14l-5 6v5h-4v-5z" fill="#a09c84"/>',
  redfilter: '<rect x="1" y="1" width="22" height="22" fill="none" stroke="#b01818" stroke-width="1.500"/><path d="M9 3v10M4 8h10" stroke="#b01818"/><circle cx="9" cy="8" r="2.500" fill="#d04040"/><path d="M10 13h11l-4 5v4h-3v-4z" fill="#e0b020"/>',
  target: '<path d="M5 9c0-7 11-9 13 0" fill="none" stroke="#111" stroke-width="2"/><path d="M2 7l3 5 3-4z" fill="#111"/><circle cx="14" cy="17" r="5" fill="none" stroke="#d01818" stroke-width="2"/><path d="M14 10v14M7 17h14" stroke="#111"/>',
  filtgray: '<path d="M3 5c3-3 6-2 9 0l3 3-4 2-5-1z" fill="#9a9a9a"/><path d="M14 10h7v12h-7z" fill="#a09c88"/><path d="M9 8v6" stroke="#888" stroke-width="2"/>',
  dashbox: '<rect x="3" y="3" width="18" height="18" fill="none" stroke="#9a8a8a" stroke-width="1.500" stroke-dasharray="2 2"/><circle cx="3" cy="3" r="1.500" fill="#a06060"/><circle cx="21" cy="21" r="1.500" fill="#a06060"/>',
  cubetilt: '<path d="M3 9l14-6 5 5-3 10-14 4-3-6z" fill="#e8e8ee" stroke="#555"/><path d="M8 9l7-2" stroke="#c84040"/><circle cx="12" cy="12" r="4" fill="none" stroke="#555"/>',
  cubeblue: '<path d="M12 1l9 5v12l-9 5-9-5V6z" fill="#4fa8e8" stroke="#2878c0"/><path d="M3 6l9 5 9-5-9-5z" fill="#b8e0f8"/><path d="M8 3v8M16 3v8" stroke="#e06060"/>',
  frame: '<path d="M2 7V2h5M17 2h5v5M22 17v5h-5M7 22H2v-5" fill="none" stroke="#222" stroke-width="1.400"/><rect x="6" y="5" width="12" height="14" fill="#fff" stroke="#445"/><rect x="8" y="10" width="8" height="6" fill="#2a5ec0"/>',
  lens: '<circle cx="14" cy="9" r="6" fill="#fff" stroke="#555" stroke-width="1.600"/><path d="M9.500 13.500L3 21" stroke="#777" stroke-width="2.600"/>',
  gear: '<circle cx="12" cy="12" r="6" fill="none" stroke="#222" stroke-width="2.400"/><circle cx="12" cy="12" r="9" fill="none" stroke="#222" stroke-width="2.400" stroke-dasharray="2.500 4.570"/>',
  gearw: '<circle cx="12" cy="12" r="5.500" fill="none" stroke="#fff" stroke-width="3.200"/><circle cx="12" cy="12" r="9" fill="none" stroke="#fff" stroke-width="3" stroke-dasharray="3 4.070"/>',
  chevd: '<path d="M5 8l7 8 7-8" fill="none" stroke="#333" stroke-width="2.800"/>',
  // left rail
  r1: '<path d="M1 1h13v3H5v7H1z" fill="#f0b030" stroke="#a06020"/><path d="M7 11v11M7 17h5M14 4h9" stroke="#1020c0" stroke-width="1.300"/><path d="M14 12l4-2 6 8-3 3z" fill="#f6d868" stroke="#8c7020"/>',
  r2: '<path d="M1 6l8-5 8 3-7 5z" fill="#b8c8f0" stroke="#2038c0"/><path d="M6 4l6 4M4 6l6 3" stroke="#2038c0"/><path d="M6 11v11M6 17h8M15 8h8" stroke="#1020c0" stroke-width="1.300"/><rect x="15" y="12" width="6" height="3" fill="#e02020"/><rect x="15" y="15" width="6" height="3" fill="#e8e020"/><rect x="15" y="18" width="6" height="3" fill="#2080e0"/>',
  r3: '<path d="M1 5h6v6H1zM7 5h6v6H7zM4 0h6v6H4z" fill="#f4c838" stroke="#a07010"/><path d="M6 12v10M6 17h7M15 8h9" stroke="#1020c0" stroke-width="1.300"/><path d="M15 14l4-2 4 2v6l-4 2-4-2z" fill="#f4c838" stroke="#a07010"/>',
  r4: '<path d="M3 1l9 6-9 6zM21 1l-9 6 9 6z" fill="#1018c8"/><rect x="2" y="14" width="9" height="9" fill="#f8e870" stroke="#333"/><path d="M13 13l9 10h-9z" fill="#d81010"/>',
  r5: '<ellipse cx="7" cy="4" rx="6" ry="2.500" fill="#d8a8c8" stroke="#902060"/><path d="M1 4v8c0 3 12 3 12 0V4" fill="#d8a8c8" stroke="#902060"/><path d="M7 14v9M7 19h7M15 9h8" stroke="#1020c0" stroke-width="1.300"/><circle cx="19" cy="18" r="4.500" fill="none" stroke="#902060" stroke-width="1.300"/><circle cx="19" cy="18" r="1.500" fill="#902060"/>',
  r6: '<path d="M4 0l4 4-4 4-4-4z" fill="#1020c0"/><path d="M3 7v14h7M12 8h11M12 22h11" stroke="#1020c0" stroke-width="1.200" fill="none"/><ellipse cx="14" cy="17" rx="5" ry="4" fill="#b8b8c0" stroke="#666" stroke-dasharray="2 1"/>',
  r7: '<rect x="1" y="1" width="10" height="8" fill="#fff" stroke="#2038c0"/><path d="M3 3h6M3 5h6M3 7h6" stroke="#2038c0" stroke-width=".8"/><path d="M4 9v13h5M11 3h12M21 16h3" stroke="#1020c0" stroke-width="1.200" fill="none"/><path d="M9 21c1-7 9-7 10 0" fill="none" stroke="#d01818" stroke-width="1.400"/>',
  r8: '<path d="M1 5h7v18H1z" fill="#e87818"/><path d="M8 3h7v20H8z" fill="#48b038"/><path d="M15 1l8 1v21h-8z" fill="#2088d0"/><path d="M3 8h3M10 6h3M17 4h4" stroke="#fff"/>',
  r9: '<ellipse cx="10" cy="14" rx="9" ry="8" fill="#1c78e0"/><text x="7" y="20" font-family="Liberation Serif, serif" font-weight="700" font-size="14" fill="#fff">i</text><path d="M11 5c6-1 10 2 11 9M14 1c6 0 9 4 10 10" fill="none" stroke="#1c58b8" stroke-width="2.200"/>',
  r10: '<path d="M3 2h13l5 5v15H3z" fill="#fff" stroke="#2038c0" stroke-width="1.400"/><circle cx="12" cy="14" r="6" fill="#3a8fd0"/><path d="M8 12c3-2 6-2 9 1-2 4-6 4-8 3z" fill="#58a848"/>',
  r11: '<circle cx="12" cy="12" r="10.500" fill="#e8eef8" stroke="#666" stroke-width="1.500"/><circle cx="12" cy="12" r="8" fill="#c4d4ec"/><path d="M12 5v7h6" fill="none" stroke="#111" stroke-width="1.800"/>',
  r12: '<rect x="2" y="1" width="9" height="4" fill="#e02020"/><rect x="2" y="5" width="9" height="5" fill="#e8c020"/><rect x="2" y="10" width="9" height="4" fill="#30c040"/><rect x="2" y="14" width="9" height="4" fill="#2080e0"/><rect x="2" y="18" width="9" height="5" fill="#1010c0"/><path d="M13 7l9 11" stroke="#111" stroke-width="3"/><path d="M12 3l2 3 3-1-2 3" fill="#fff"/>',
  r13: '<path d="M4 20l12-13 4-2 3 2-3 4-3-1-12 12z" fill="#9c9ca0"/><path d="M2 16l6 1 2 3-4 3-4-2z" fill="#e8781c"/><path d="M16 15l6 5-3 3-6-5z" fill="#888"/>',
  r14: '<path d="M1 5l6-2v18l-6 2z" fill="#e4e4e4" stroke="#777"/><rect x="7" y="3" width="16" height="15" fill="#fff" stroke="#777"/><path d="M10 6h10v9H10z" fill="#d82020"/><path d="M12 15l3-5 3 5z" fill="#e8e8e8"/>',
  // tree
  tlink: '<g transform="scale(1.700)"><rect x="5" y="0" width="4" height="3" fill="#f0d040" stroke="#222" stroke-width=".6"/><rect x="0.500" y="10.500" width="3.200" height="3" fill="#fff" stroke="#c01010" stroke-width=".8"/><rect x="5.400" y="10.500" width="3.200" height="3" fill="#fff" stroke="#c01010" stroke-width=".8"/><rect x="10.300" y="10.500" width="3.200" height="3" fill="#fff" stroke="#c01010" stroke-width=".8"/><path d="M7 3v7.500M2 10.500V8h10v2.500" stroke="#222" stroke-width=".6" fill="none"/></g>',
  tmotion: '<path d="M0 6h9v8H0zM4 12h8v10H4zM11 0h7v9h-7z" fill="#f4c848" stroke="#b88818"/><rect x="13" y="1" width="10" height="15" fill="#4aa8c0"/><path d="M15 4h6M15 7h6" stroke="#e0f0f0"/>',
  tjoint: '<path d="M2 10L18 2l4 10-20 6z" fill="#f0b428" stroke="#8c6010"/><path d="M2 10v11l5-3" fill="#e8a820" stroke="#8c6010"/><circle cx="9" cy="9" r="1.500" fill="#fff4c0"/><circle cx="15" cy="8" r="1.500" fill="#fff4c0"/><circle cx="11" cy="14" r="1.500" fill="#fff4c0"/>',
  tjointr: '<path d="M2 10L18 2l4 10-20 6z" fill="#f0b428" stroke="#8c6010"/><path d="M2 10C5 3 12 1 18 2" fill="none" stroke="#d01010" stroke-width="2.500"/><path d="M2 10v11l5-3" fill="#e8a820" stroke="#c01010"/><circle cx="9" cy="9" r="1.500" fill="#fff4c0"/><circle cx="15" cy="8" r="1.500" fill="#fff4c0"/>',
  // file dialog
  folder: '<path d="M4 3h9v18l-3 2H4z" fill="#f4dc88" stroke="#c8a84c"/><path d="M13 5h7v15l-7 1z" fill="#fbeeb0" stroke="#c8a84c"/>',
  rfifile: '<path d="M4 1h12l4 4v18H4z" fill="#8490b0" stroke="#4c587c"/>',
  backarrow: '<path d="M2 12l9-8v5h11v6H11v5z" fill="#20c8d0" stroke="#111"/>',
  upfolder: '<path d="M2 6h7l2 2h11v14H2z" fill="#f4f060" stroke="#111"/><path d="M11 18v-7M8 14l3-4 3 4" fill="none" stroke="#111" stroke-width="1.500"/>',
  newfolder: '<path d="M2 8h7l2 2h11v12H2z" fill="#f0e878" stroke="#111"/><path d="M18 1v8M14 5h8M15 2l6 6M21 2l-6 6" stroke="#111"/>',
  viewgrid: '<rect x="2" y="2" width="20" height="20" fill="#fff" stroke="#111"/><rect x="2" y="2" width="20" height="4" fill="#0a1a80"/><path d="M6 9h2M11 9h2M16 9h2M6 13h2M11 13h2M16 13h2M6 17h2M11 17h2M16 17h2" stroke="#0a1a80" stroke-width="1.500"/>',
  openfolder: '<path d="M2 6h7l2 2h9v12H2z" fill="#e8c860"/><path d="M4 11h19l-3 9H2z" fill="#f8e48c" stroke="#b89830"/><path d="M12 7c3-3 6-2 7 1M17 3l3 5-5 0z" fill="#30b040" stroke="#208030"/>',
  recent: '<circle cx="7" cy="7" r="6" fill="#d8e0e8" stroke="#777"/><path d="M7 3v4h3" fill="none" stroke="#444"/><rect x="13" y="4" width="10" height="12" fill="#f4f4f4" stroke="#999"/><rect x="6" y="12" width="11" height="8" fill="#4f88c8" stroke="#eee"/><path d="M3 19h18l-3 4H5z" fill="#b4b4b8" stroke="#666"/>',
  desktop: '<rect x="1" y="3" width="22" height="18" fill="#c8c8d8"/><rect x="2" y="4" width="20" height="16" fill="#3a6fd0"/><rect x="2" y="17" width="20" height="3" fill="#243858"/><rect x="3" y="18" width="2" height="2" fill="#e0a030"/>',
  library: '<path d="M1 4h8l2 2h12v15H1z" fill="#f4d878" stroke="#b89840"/><rect x="3" y="3" width="3" height="2" fill="#30c030"/><rect x="9" y="5" width="3" height="2" fill="#d03020"/><rect x="16" y="5" width="3" height="2" fill="#30a0e0"/><path d="M1 9h22v12H1z" fill="#fbeaa8" stroke="#c8a048"/><path d="M6 14h12v7h-3v-4H9v4H6z" fill="#68b8d8" stroke="#fff" stroke-width=".5"/>',
  computer: '<rect x="1" y="8" width="7" height="12" fill="#ddd" stroke="#888"/><path d="M7 3l16-1v14l-16 2z" fill="#dfe6f2" stroke="#999"/><path d="M9 5l12-1v10L9 16z" fill="#0c2ab0"/><path d="M9 5l5 0 4 9-9 2z" fill="#3c60d0"/><ellipse cx="15" cy="21" rx="7" ry="2" fill="#bbb" stroke="#777"/>',
  network: '<circle cx="9" cy="9" r="8" fill="#2a80d0"/><path d="M4 5c3-3 7-3 9 0-2 3-6 4-8 2zM5 12l5 0 1 4-4 0z" fill="#48b048"/><path d="M10 7l13-1v11l-13 1z" fill="#dfe6f2" stroke="#999"/><path d="M12 9l9-1v7l-9 1z" fill="#0c2ab0"/><ellipse cx="17" cy="21" rx="6" ry="2" fill="#bbb" stroke="#777"/>',
  // taskbar
  winflag: '<path d="M2 5l9-2v8H2z" fill="#e85020"/><path d="M12 3l9-2v10h-9z" fill="#60b030"/><path d="M2 12h9v8l-9-2z" fill="#2a80e0"/><path d="M12 12h9v10l-9-2z" fill="#f0c020"/>',
  qm: '<rect x="1" y="1" width="22" height="22" rx="2" fill="#1470c8"/><circle cx="10" cy="11" r="6" fill="none" stroke="#fff" stroke-width="1.800"/><path d="M3 3l14 16M17 3L3 19" stroke="#fff" stroke-width="1.300"/><text x="14" y="22" font-family="Liberation Sans, sans-serif" font-weight="700" font-size="10" fill="#f0e020">M</text>',
  paint: '<path d="M9 4c6-3 12 2 10 9-1 6-9 10-14 7C0 17 2 7 9 4z" fill="#dfe8f0" stroke="#8898a8"/><circle cx="8" cy="9" r="2" fill="#e03030"/><circle cx="6" cy="14" r="2" fill="#30a0e0"/><circle cx="13" cy="7" r="2" fill="#f0c020"/><path d="M21 1c1 2-2 5-4 10l-2 9-1 0 1-9c1-5 4-9 6-10z" fill="#e09040"/>',
  notepad: '<path d="M7 3l13 2-3 18-13-3z" fill="#a8d0e8" stroke="#78a0b8"/><path d="M8 3l-1 3M12 4l-1 3M16 4l-1 3" stroke="#789"/>',
  excel: '<rect x="6" y="2" width="16" height="20" fill="#f0f4f0" stroke="#99a"/><rect x="2" y="4" width="13" height="15" fill="#20803c"/><path d="M5 7l7 9M12 7l-7 9" stroke="#fff" stroke-width="2"/><path d="M16 9h5M16 13h5M16 17h5" stroke="#50a060"/>',
  sw: '<path d="M5 1h14l3 4v16l-3 2H5l-3-2V5z" fill="#d81c1c"/><text x="4" y="17" font-family="Liberation Sans, sans-serif" font-weight="700" font-size="11" fill="#fff">SW</text>',
  calcw: '<rect x="3" y="1" width="18" height="22" fill="#c4d8f0" stroke="#6c8cb8"/><rect x="5" y="3" width="14" height="5" fill="#eaf2ff"/><path d="M6 11h3M11 11h3M16 11h3M6 15h3M11 15h3M16 15h3M6 19h3M11 19h3M16 19h3" stroke="#6c8cb8" stroke-width="2"/>',
  ds: '<rect x="1" y="0" width="22" height="24" fill="#080808"/><path d="M6 3c5 0 7 3 3 6-2 1-3 2-1 3 3 1 3 5-1 7" fill="none" stroke="#fff" stroke-width="1.500"/><path d="M15 12c4 1 7 5 7 11h-7z" fill="#8c4c28"/><path d="M5 22l8-4" stroke="#2080d0" stroke-width="2"/>',
  word: '<rect x="6" y="2" width="16" height="20" fill="#f0f4f8" stroke="#99a"/><rect x="2" y="4" width="13" height="15" fill="#1858b8"/><text x="3" y="16" font-family="Liberation Sans, sans-serif" font-weight="700" font-size="11" fill="#fff">W</text><path d="M16 9h5M16 13h5M16 17h5" stroke="#5080c0"/>',
  wheel: '<path d="M12 12C9 7 11 1 16 1c3 2 3 7-4 11z" fill="#8c30c0"/><path d="M12 12c5-3 10-3 11 2 0 3-5 6-11-2z" fill="#d81818"/><path d="M12 12c4 3 6 9 2 11-4 1-6-4-2-11z" fill="#f0c020"/><path d="M12 12c-1 5-4 10-8 8-3-3 1-8 8-8z" fill="#70b820"/><path d="M12 12C7 12 2 9 3 5c2-3 7-1 9 7z" fill="#20a0e0"/><circle cx="12" cy="12" r="2" fill="#fff"/>',
  traynet: '<rect x="3" y="1" width="7" height="7" fill="#fff" stroke="#333"/><rect x="4" y="9" width="14" height="10" fill="#a8a8a8" stroke="#333"/><path d="M11 12l10 10M21 12L11 22" stroke="#d01818" stroke-width="2.400"/>',
  traysound: '<path d="M3 9h4l6-6v18l-6-6H3z" fill="#fff" stroke="#555"/><circle cx="17" cy="16" r="6" fill="#fff" stroke="#d01818"/><path d="M14 13l6 6M20 13l-6 6" stroke="#d01818" stroke-width="2"/>',
  trayflag: '<path d="M4 2v21" stroke="#444" stroke-width="1.500"/><path d="M5 3c6-2 9 3 15 1v10c-6 2-9-3-15-1z" fill="#fff" stroke="#777"/>',
  traydesk: '<rect x="1" y="3" width="22" height="18" fill="#2878c8" stroke="#124"/><rect x="1" y="17" width="22" height="4" fill="#222"/><rect x="3" y="12" width="3" height="3" fill="#e0c020"/>',
};

// small inline icon component
const Ico = (p: { n: string; s?: number }) =>
  h('svg', { viewBox: '0 0 24 24', width: p.s ?? 22, height: p.s ?? 22, innerHTML: icons[p.n] ?? '' });
Ico.props = ['n', 's'];

interface TbItem {
  name: string;
  kind: string;
  ml: number;
  w: number;
}

const defaultW: Record<string, number> = { grip: 3, caret: 6, caretl: 6, sep: 1, search: 144, spin: 50 };

// spec items are "name startX [width]"; the margin comes from the previous item's end
function parseItems(from: number, spec: string): TbItem[] {
  let end = from;
  return spec.split(',').map((part) => {
    const [name, x, w] = part.trim().split(' ');
    const width = w ? Number(w) : defaultW[name] ?? 22;
    const ml = Number(x) - end;
    end = Number(x) + width;
    const kind = icons[name] ? 'icon' : defaultW[name] ? name : 'text';
    return { name, kind, ml, w: width };
  });
}

const group = (x0: number, x1: number, spec: string) => ({ w: x1 - x0, items: parseItems(x0, spec) });

const toolbarRows = [
  [
    group(0, 573, 'grip 5,nx 12 24,启动 39 24,caret 66,save 81 20,sep 109,scissors 115 24,copy 148 20,paste 180 20,del 212 18,sep 239,undo 248 18,caret 277,sep 288,rainbow 295 22,caret 325,sep 337,infolist 343 23,sep 374,infodia 380 23,sep 411,search 416,caretl 563'),
    group(573, 910, 'grip 580,fit 587 22,caret 617,laptop 630 21,caret 660,cube 673 23,caret 703,cutO 716 22,cutG 748 22,caret 777,blackrect 789 24,caret 820,sep 832,pageA 842 20,pageB 869 26,caretl 899'),
    group(910, 1203, 'grip 916,stack 923 23,triad 953 24,caret 984,sep 996,handdia 1002 24,palette 1033 24,sep 1063,playdia 1070 23,caret 1101,sep 1113,antenna 1119 24,caret 1150,ruler 1162 24,caretl 1192'),
  ],
  [
    group(0, 809, 'grip 5,calc 12 22,linkx 43 20,sep 72,fx 80 24,pin 112 21,lshape 141 22,gears 172 24,caret 203,spring 216 22,caret 246,wire 259 23,caret 289,arrowb 304 20,caret 332,bulb 344 26,caret 375,sep 387,lshape2 394 23,rainbow 430 22,chain 467 25,sep 498,rects 505 24,caret 535,sep 548,ring 553 25,caret 584,sep 596,bar 603 24,caretl 634,sep 645,chaincheck 651 24,sep 680,calchand 690 22,calc2 720 22,sep 749,grayl 756 24,caret 787,caretl 798'),
    group(809, 1116, 'grip 815,plot 822 22,caret 852,tag 864 26,caret 895,xplot 908 22,caret 938,arrowl 953 16,arrowr 986 16,plot2 1013 22,camera 1046 21,cubesel 1074 24,caretl 1104'),
    group(1116, 1543, 'grip 1121,first 1129 18,prev 1158 14,play 1198 14,next 1231 14,last 1256 18,pause 1287 12,camplay 1312 25,stop 1349 14,sep 1375,spin 1382,tridown 1442 18,box 1471 22,flag 1502 22,caretl 1532'),
    group(1543, 1830, 'grip 1548,node 1555 23,layers 1585 24,layerlist 1617 23,sep 1647,tag2 1654 23,sep 1684,checka 1690 22,checkb 1722 23,checkc 1752 25,sep 1783,abc 1788 27,caretl 1819'),
  ],
  [
    group(0, 126, 'grip 5,square 12 22,caret 42,gridcheck 55 21,rotate 86 22,caretl 115'),
    group(126, 210, 'grip 132,blocks 138 24,blocks 170 24,caretl 199'),
  ],
];

const filterItems = parseItems(313, 'chaingray 320 18,sep 344,filter 350 16,redfilter 370 16,caret 392,target 405 16,filtgray 426 16,sep 450,dashbox 456 16,caret 479,sep 491,cubetilt 497 16,cubeblue 520 16');
const bottomItems = parseItems(0, 'grip 5,blocks 12 22,blocksplus 43 24,caret 74,sep 85,keyy 91 24,blocks 122 22,stairs 155 22,sep 184,ringrect 191 22,treeg 221 22,sep 252,cubewire 258 22,caret 285,caretl 297');

const menuDefs: [string, string, number][] = [
  ['文件', 'F', 29], ['编辑', 'E', 80], ['视图', 'V', 129], ['插入', 'S', 181], ['格式', 'R', 231], ['工具', 'T', 282],
  ['装配', 'A', 332], ['信息', 'I', 384], ['分析', 'L', 430], ['首选项', 'P', 487], ['窗口', 'O', 548], ['帮助', 'H', 600],
];
const menu = menuDefs.map(([label, key, x], i) => ({
  label,
  key,
  w: i < menuDefs.length - 1 ? menuDefs[i + 1][2] - x : 46,
}));

const railDefs: [string, number, number][] = [
  ['r1', 250, 44], ['r2', 295, 39], ['r3', 337, 39], ['r4', 379, 40], ['r5', 421, 40], ['r6', 463, 40], ['r7', 505, 39],
  ['r8', 547, 39], ['r9', 600, 40], ['r10', 654, 40], ['r11', 709, 39], ['r12', 750, 40], ['r13', 792, 40], ['r14', 834, 40],
];
const railTabs = railDefs.map(([n, y, h], i) => ({
  n,
  h,
  active: i === 0,
  mt: i === 0 ? y - 232 : y - railDefs[i - 1][1] - railDefs[i - 1][2],
}));

const treeRows = [
  { pad: 1, icon: 'tlink', label: 'link' },
  { pad: 4, tog: true, icon: 'tmotion', label: 'motion_1', env: 'RecurDyn' },
  { pad: 23, tog: true, chk: true, icon: 'pin', label: '连杆' },
  { pad: 59, chk: true, icon: 'pin', label: 'L001' },
  { pad: 59, chk: true, icon: 'pin', label: 'L002', sel: true },
  { pad: 59, chk: true, icon: 'pin', label: 'L003' },
  { pad: 23, tog: true, chk: true, icon: 'lshape', label: '运动副' },
  { pad: 59, chk: true, icon: 'tjointr', label: 'J001' },
  { pad: 59, chk: true, icon: 'tjoint', label: 'J002' },
  { pad: 59, chk: true, icon: 'tjoint', label: 'J003', blue: true },
  { pad: 59, chk: true, icon: 'tjoint', label: 'J004', blue: true },
  ...Array.from({ length: 22 }, () => ({ pad: 0, label: '' })),
] as { pad: number; tog?: boolean; chk?: boolean; icon?: string; label: string; env?: string; sel?: boolean; blue?: boolean }[];

const places = [
  { n: 'recent', label: '最近访问的位置' },
  { n: 'desktop', label: '桌面' },
  { n: 'library', label: '库' },
  { n: 'computer', label: '计算机' },
  { n: 'network', label: '网络' },
];

const taskApps = [
  { k: 1, n: 'notepad', s: 34, ml: 0 },
  { k: 2, n: 'nx', s: 32, ml: 17 },
  { k: 3, n: 'excel', s: 34, ml: 17 },
  { k: 4, n: 'sw', s: 34, ml: 15 },
  { k: 5, n: 'calcw', s: 32, ml: 17 },
  { k: 6, n: 'ds', s: 32, ml: 18 },
  { k: 7, n: 'word', s: 34, ml: 17 },
  { k: 8, n: 'wheel', s: 34, ml: 15 },
];
</script>

<style>
html,
body {
  margin: 0;
  background: #d4d0c8;
}
</style>

<style scoped>
.nx {
  position: relative;
  width: 1920px;
  height: 1080px;
  overflow: hidden;
  display: flex;
  flex-direction: column;
  font-family: "DejaVu Sans", "Noto Sans CJK SC", sans-serif;
  font-size: 12px;
  color: #111;
  background: #d4d0c8;
}

svg {
  display: block;
  flex: none;
}

.cj {
  font-family: "Noto Sans CJK SC", sans-serif;
  font-size: 12px;
}

/* Title bar */
.titlebar {
  height: 26px;
  flex: none;
  display: flex;
  align-items: center;
  box-sizing: border-box;
  background: linear-gradient(#6a6a6a, #444 6px, #1a1a1a 6px);
  border-bottom: 1px solid #000;
  position: relative;
}

.title-logo {
  margin: 0 3px 0 3px;
}

.title-text {
  font-family: "Liberation Mono", "Noto Sans CJK SC", monospace;
  font-weight: 700;
  font-size: 11.500px;
  color: #f4f4f4;
  padding-top: 1px;
}

.title-text .cj {
  font-size: 14px;
}

.siemens {
  margin-left: auto;
  margin-right: 24px;
  font-family: "Liberation Sans", sans-serif;
  font-weight: 700;
  font-size: 13px;
  color: #eee;
}

.win-btn {
  width: 18px;
  height: 18px;
  margin: 0 2px 0 0;
  background: linear-gradient(#777, #333);
  border: 1px solid #888;
  border-radius: 3px;
  box-sizing: border-box;
  overflow: hidden;
}

.win-btn svg {
  margin: -1px;
}

.win-close {
  background: linear-gradient(#f88a70, #e0401c);
  border-color: #a33;
}

/* Menu */
.menubar {
  height: 26px;
  flex: none;
  display: flex;
  align-items: center;
  background: linear-gradient(#e8e8e8, #dedede);
  border-bottom: 1px solid #bdbdbd;
  box-sizing: border-box;
  padding: 0 0 1px 8px;
}

.menu-icon {
  margin-right: 5px;
}

.menu-item {
  flex: none;
  font-family: "Noto Sans CJK SC", sans-serif;
  white-space: nowrap;
  color: #222;
}

.sub-btns {
  margin-left: auto;
  display: flex;
  gap: 2px;
  padding-right: 4px;
}

.sub-btn {
  width: 16px;
  height: 17px;
  border: 1px solid #777;
  border-radius: 3px;
  background: linear-gradient(#fafafa, #ddd);
  position: relative;
  text-align: center;
  line-height: 17px;
  font-size: 12px;
  color: #bbb;
}

.sub-off {
  border-color: #bbb;
}

.sub-min {
  position: absolute;
  left: 4px;
  bottom: 3px;
  width: 8px;
  height: 2px;
  background: #444;
}

.sub-res {
  position: absolute;
  left: 3px;
  top: 4px;
  width: 8px;
  height: 7px;
  border: 1px solid #444;
  border-top-width: 3px;
  box-sizing: border-box;
}

/* Toolbars */
.toolbars {
  flex: none;
  height: 102px;
  background: linear-gradient(#e6e6e6, #c8c8c8);
  border-bottom: 1px solid #a8a8a8;
  box-sizing: border-box;
}

.tb-row {
  height: 34px;
  display: flex;
}

.tb-group {
  flex: none;
  height: 33px;
  display: flex;
  align-items: center;
  box-sizing: border-box;
  background: linear-gradient(#e4e4e4, #d8d8d8);
  border-bottom: 1px solid #c2c2c2;
  border-top: 1px solid #f2f2f2;
  box-shadow: inset -1px 0 #c6c6c6;
}

.tb-item {
  flex: none;
  display: flex;
  align-items: center;
  justify-content: center;
  font-family: "Noto Sans CJK SC", sans-serif;
  white-space: nowrap;
}

.k-grip {
  height: 24px;
  border-left: 2px dotted #999;
  box-sizing: border-box;
}

.k-sep {
  height: 26px;
  background: #f4f4f4;
  box-shadow: -1px 0 #bcbcbc;
}

.k-caret,
.k-caretl {
  height: 4px;
  width: 6px;
  box-sizing: border-box;
  border-left: 3px solid transparent;
  border-right: 3px solid transparent;
  border-top: 4px solid #111;
}

.k-caretl {
  transform: translateY(7px);
}

.k-search {
  height: 24px;
  background: #fff;
  border-top: 2px solid #555;
  border-left: 2px solid #666;
  box-sizing: border-box;
  justify-content: space-between;
  padding: 0 6px 0 2px;
}

.search-text {
  color: #999;
}

.k-spin {
  height: 21px;
  background: #fff;
  border: 1px solid #889;
  border-radius: 3px;
  box-sizing: border-box;
  justify-content: space-between;
}

.spin-val {
  color: #a05000;
  padding-left: 3px;
}

.drop-arrow {
  width: 16px;
  height: 100%;
  flex: none;
  background: linear-gradient(#7fb0ee, #4b82d0);
  position: relative;
  display: block;
}

.drop-arrow::after {
  content: "";
  position: absolute;
  left: 3px;
  top: 5px;
  border-left: 5px solid transparent;
  border-right: 5px solid transparent;
  border-top: 6px solid #111;
}

/* Filter bar */
.filterbar {
  flex: none;
  height: 31px;
  display: flex;
  align-items: center;
  background: linear-gradient(#dadada, #dedede);
  border-bottom: 1px solid #b8b8b8;
  box-sizing: border-box;
  padding-left: 6px;
  position: relative;
}

.fb-select {
  height: 19px;
  box-sizing: border-box;
  display: flex;
  justify-content: space-between;
  background: #fff;
  border: 1px solid #777;
  border-radius: 2px;
  font-family: "Noto Sans CJK SC", sans-serif;
  line-height: 17px;
  padding-left: 1px;
}

.fb-select-a {
  width: 144px;
  margin-right: 10px;
}

.fb-select-b {
  width: 153px;
}

.filter-end {
  position: absolute;
  right: 6px;
  top: 17px;
  border-left: 3px solid transparent;
  border-right: 3px solid transparent;
  border-top: 4px solid #111;
}

/* Cue line */
.cuebar {
  flex: none;
  height: 21px;
  display: flex;
  align-items: center;
  background: #dcdcdc;
  font-family: "Noto Sans CJK SC", sans-serif;
  font-weight: 700;
  font-size: 13px;
}

.cue-left {
  width: 921px;
  box-sizing: border-box;
  padding-left: 3px;
  border-right: 1px solid #fafafa;
  height: 100%;
  line-height: 20px;
}

.cue-mid {
  padding-left: 2px;
}

.cue-right {
  margin-left: auto;
  height: 100%;
  width: 78px;
  box-sizing: border-box;
  border-left: 1px solid #bbb;
  display: flex;
  align-items: center;
  gap: 10px;
  padding-left: 20px;
}

/* Main */
.main {
  flex: none;
  height: 796px;
  display: flex;
  border-top: 1px solid #aaa;
  box-sizing: border-box;
}

.rail {
  width: 31px;
  flex: none;
  display: flex;
  flex-direction: column;
  background: linear-gradient(90deg, #c8c8c8, #a9a9a9 70%, #8c8c8c);
  padding-top: 6px;
  box-sizing: border-box;
}

.rail-gear {
  margin: 0 0 2px 6px;
}

.rail-tab {
  margin-left: 3px;
  width: 28px;
  box-sizing: border-box;
  display: flex;
  align-items: center;
  justify-content: center;
  background: #d4d4d4;
  border: 1px solid #777;
  border-right: 1px solid #999;
  border-radius: 5px 0 0 5px;
  flex: none;
}

.rail-tab svg {
  margin-left: 1px;
}

.rail-tab--active {
  background: linear-gradient(#fafafa, #eee);
  border-right: none;
  border-color: #999;
}

.navigator {
  width: 469px;
  flex: none;
  background: #e8e8e8;
  display: flex;
  flex-direction: column;
  box-sizing: border-box;
  padding-right: 11px;
  border-left: 1px solid #f8f8f8;
}

.nav-head {
  height: 31px;
  flex: none;
  display: flex;
  align-items: center;
  justify-content: space-between;
  padding: 0 4px 0 11px;
  font-family: "Noto Sans CJK SC", sans-serif;
  font-weight: 700;
  font-size: 13px;
}

.nav-max {
  width: 13px;
  height: 12px;
  box-sizing: border-box;
  border: 1px solid #111;
  border-top-width: 2px;
}

.tree {
  margin-left: 6px;
  flex: none;
  height: 699px;
  box-sizing: border-box;
  background: #fff;
  border: 1px solid #888;
  display: flex;
  flex-direction: column;
  overflow: hidden;
}

.tree-header,
.tree-row {
  display: flex;
  flex: none;
}

.tree-header {
  height: 19px;
  background: linear-gradient(#f6f6f6, #d8d8d8);
  border-bottom: 1px solid #fff;
  box-sizing: border-box;
  margin: 1px 0 0 1px;
  font-family: "Noto Sans CJK SC", sans-serif;
  line-height: 19px;
}

.col-name {
  width: 282px;
  flex: none;
  display: flex;
  align-items: center;
  box-sizing: border-box;
}

.tree-header .col-name {
  padding-left: 6px;
  border-right: 1px solid #999;
}

.col-state {
  width: 100px;
  flex: none;
  box-sizing: border-box;
}

.tree-header .col-state {
  padding-left: 6px;
  border-right: 1px solid #999;
}

.col-env {
  flex: 1;
  padding-left: 5px;
  color: #444;
  white-space: nowrap;
  overflow: hidden;
  line-height: 21px;
}

.tree-header .col-env {
  line-height: 19px;
}

.tree-body {
  position: relative;
  flex: 1;
  overflow: hidden;
  margin-left: 1px;
}

.tree-dots {
  position: absolute;
  left: 0;
  top: 0;
  z-index: 1;
}

.tree-row {
  height: 20px;
  box-sizing: border-box;
  border-bottom: 1px solid #e6e6e6;
  line-height: 19px;
  position: relative;
}

.tree-row .col-name,
.tree-row .col-state {
  border-right: 1px solid #e6e6e6;
  height: 19px;
}

.tree-row--alt {
  background: #f6f6f6;
}

.tog {
  width: 9px;
  height: 9px;
  box-sizing: border-box;
  border: 1px solid #777;
  background: linear-gradient(#fff 3px, #555 3px, #555 4px, #fff 4px);
  border-radius: 2px;
  margin-right: 8px;
  flex: none;
  position: relative;
  z-index: 2;
}

.chk {
  width: 12px;
  height: 12px;
  box-sizing: border-box;
  border: 1px solid #111;
  background: #fff;
  margin-right: 3px;
  flex: none;
  position: relative;
  z-index: 2;
  overflow: hidden;
}

.chk::after {
  content: "";
  position: absolute;
  left: 2px;
  top: 0;
  width: 4px;
  height: 8px;
  border-right: 3px solid #d81818;
  border-bottom: 3px solid #d81818;
  box-sizing: border-box;
  transform: rotate(40deg);
}

.tree-icon {
  margin-right: 0;
}

.tree-label {
  flex: 1;
  height: 100%;
  padding-left: 4px;
  color: #333;
  white-space: nowrap;
  line-height: 21px;
}

.tree-label--blue {
  color: #3a6cf0;
}

.tree-row--sel .tree-label,
.tree-row--sel .col-state,
.tree-row--sel .col-env {
  background: #0a2463;
  color: #fff;
}

.hscroll {
  flex: none;
  height: 16px;
  display: flex;
  background: #f0f0f0;
  border-top: 1px solid #ddd;
}

.sb-btn {
  width: 17px;
  flex: none;
  display: flex;
  align-items: center;
  justify-content: center;
  background: #e2e2e2;
  font-size: 8px;
  color: #333;
  border: 1px solid #aaa;
  box-sizing: border-box;
}

.sb-thumb {
  width: 190px;
  flex: none;
  background: linear-gradient(#ddd, #bbb);
  border: 1px solid #888;
  box-sizing: border-box;
}

.sb-track {
  flex: 1;
}

.splitter {
  flex: none;
  height: 13px;
  display: flex;
  align-items: center;
  justify-content: center;
}

.splitter i {
  width: 83px;
  height: 4px;
  background: #bbb;
  border-radius: 2px;
}

.nav-sect {
  flex: none;
  height: 23px;
  margin-left: 6px;
  display: flex;
  align-items: center;
  justify-content: space-between;
  padding: 0 5px;
  background: linear-gradient(#f2f2f2, #cfcfcf);
  border-bottom: 1px solid #999;
  font-family: "Noto Sans CJK SC", sans-serif;
  font-weight: 700;
  box-sizing: border-box;
}

.viewport {
  flex: 1;
  position: relative;
  background: linear-gradient(#b0b1b3, #d2d3d4 47%, #ececec);
  border-bottom: 1px solid #e8a860;
  box-shadow: inset 0 1px #e8a860;
  overflow: hidden;
}

.scene {
  position: absolute;
  left: 0;
  top: 0;
}

.sogou,
.tk-sogou {
  font-family: "Liberation Sans", sans-serif;
  font-weight: 700;
  color: #fff;
  background: #e8642c;
  border: 2px solid #fff;
  border-radius: 2px;
  text-align: center;
  box-sizing: border-box;
  box-shadow: 0 0 1px #777;
}

.sogou {
  position: absolute;
  left: 1387px;
  top: 751px;
  width: 19px;
  height: 19px;
  line-height: 15px;
  font-size: 13px;
}

/* Bottom toolbar */
.bottombar {
  flex: none;
  height: 34px;
  background: linear-gradient(#e6e6e6, #c8c8c8);
  border-bottom: 1px solid #c0c0c0;
  box-sizing: border-box;
}

.bottom-group {
  width: 307px;
}

/* Taskbar */
.taskbar {
  flex: none;
  height: 44px;
  display: flex;
  align-items: center;
  background: #d4d0c8;
  border-top: 1px solid #fff;
  box-sizing: border-box;
  position: relative;
  z-index: 5;
  font-family: "Noto Sans CJK SC", sans-serif;
}

.start {
  width: 46px;
  height: 36px;
  margin-left: 3px;
  box-sizing: border-box;
  display: flex;
  align-items: center;
  gap: 1px;
  padding-left: 2px;
  border: 2px solid;
  border-color: #fff #555 #555 #fff;
  font-size: 12px;
  flex: none;
}

.tk-qm {
  margin-left: 17px;
}

.tk-nx {
  margin-left: 19px;
}

.tk-btn {
  flex: none;
  width: 158px;
  height: 36px;
  box-sizing: border-box;
  display: flex;
  align-items: center;
  border: 2px solid;
  border-color: #fff #555 #555 #fff;
  padding-left: 2px;
  gap: 3px;
}

.tk-btn-a {
  margin-left: 11px;
}

.tk-btn-b {
  margin-left: 3px;
}

.tk-btn-c {
  margin-left: 2px;
  background: #fff;
  border-color: #333 #fff #fff #333;
}

.tk-text {
  font-family: "Liberation Mono", "Noto Sans CJK SC", monospace;
  font-size: 10px;
  white-space: nowrap;
}

.tk-text--bold {
  font-weight: 700;
}

.tk-apps {
  display: flex;
  align-items: center;
  margin-left: 10px;
}

.tk-sogou {
  position: relative;
  margin-left: auto;
  width: 16px;
  height: 18px;
  line-height: 14px;
  font-size: 12px;
}

.tk-sep {
  width: 1px;
  height: 28px;
  background: #888;
  margin: 0 3px 0 5px;
  box-shadow: 1px 0 #fff;
}

.tray {
  width: 158px;
  height: 37px;
  box-sizing: border-box;
  margin-right: 2px;
  display: flex;
  align-items: center;
  gap: 5px;
  padding-left: 7px;
  border: 1px solid;
  border-color: #777 #fff #fff #777;
}

.clock {
  display: flex;
  flex-direction: column;
  align-items: center;
  width: 64px;
  margin-left: 2px;
  font-family: "Liberation Mono", monospace;
  font-size: 10px;
  line-height: 16px;
}

/* Flexible link dialog */
.flex-dialog {
  position: absolute;
  left: 499px;
  top: 265px;
  width: 317px;
  height: 450px;
  display: flex;
  flex-direction: column;
  background: #e8e8e8;
  box-shadow: inset 1px 0 #999, inset -1px 0 #999;
}

.fd-title {
  height: 21px;
  flex: none;
  display: flex;
  align-items: center;
  background: #1a1a1a;
  border-radius: 6px 6px 0 0;
  color: #f4f4f4;
  font-family: "Noto Sans CJK SC", sans-serif;
  font-weight: 700;
  font-size: 14px;
  letter-spacing: 2px;
}

.fd-gear {
  margin: 0 6px 0 4px;
}

.fd-name {
  flex: 1;
  padding-left: 4px;
  border-left: 1px solid #999;
  line-height: 20px;
}

.fd-tool {
  width: 21px;
  height: 21px;
  display: flex;
  align-items: center;
  justify-content: center;
  border-left: 1px solid #999;
}

.fd-body {
  flex: 1;
  padding: 9px 12px 0 11px;
  display: flex;
  flex-direction: column;
}

.fd-tabs {
  display: flex;
  height: 22px;
  flex: none;
  align-items: flex-end;
}

.fd-tab {
  width: 45px;
  height: 20px;
  box-sizing: border-box;
  background: #d8d8d8;
  border: 1px solid #888;
  border-bottom: none;
  border-radius: 3px 3px 0 0;
  text-align: center;
  font-family: "Noto Sans CJK SC", sans-serif;
  line-height: 20px;
  margin-left: 1px;
}

.fd-tab--on {
  width: 50px;
  height: 22px;
  margin-left: 0;
  background: #eee;
  border-color: #aaa;
  line-height: 22px;
  position: relative;
  z-index: 1;
  margin-bottom: -1px;
}

.fd-pane {
  height: 340px;
  flex: none;
  box-sizing: border-box;
  border: 1px solid #aaa;
  padding: 5px 6px 0 3px;
  font-family: "Noto Sans CJK SC", sans-serif;
}

.fd-head {
  height: 23px;
  box-sizing: border-box;
  display: flex;
  align-items: center;
  justify-content: space-between;
  padding-left: 6px;
  background: linear-gradient(#f6f6f6, #d4d4d4);
  border-bottom: 1px solid #777;
}

.fd-head b {
  font-size: 12px;
}

.fd-chev {
  width: 22px;
  height: 22px;
  box-sizing: border-box;
  border-left: 1px solid #999;
  position: relative;
  flex: none;
}

.fd-chev::after {
  content: "";
  position: absolute;
  left: 7px;
  top: 9px;
  width: 8px;
  height: 8px;
  box-sizing: border-box;
  border-left: 3px solid #444;
  border-top: 3px solid #444;
  transform: rotate(45deg);
}

.fd-sec {
  background: #cfcfcf;
  box-sizing: border-box;
  padding: 0 8px;
}

.fd-sec-link {
  height: 47px;
  padding-top: 6px;
}

.fd-select-bar {
  height: 31px;
  display: flex;
  align-items: center;
  gap: 3px;
  padding-left: 1px;
  border-radius: 4px;
  background: linear-gradient(90deg, #e0a068, #dfb48a 45%, #d8d0c4 90%, #cfcfcf);
  position: relative;
}

.fd-pick {
  position: absolute;
  right: 0;
  top: 0;
  width: 30px;
  height: 31px;
  box-sizing: border-box;
  border: 1px solid #777;
  border-radius: 3px;
  background: linear-gradient(#fff2e6 0, #f89c50 50%, #f47e20);
  display: flex;
  align-items: center;
  justify-content: center;
}

.fd-sec-model {
  height: 60px;
  padding-top: 6px;
}

.fd-label {
  line-height: 20px;
}

.fd-input-row {
  display: flex;
  align-items: center;
  margin-top: 2px;
}

.fd-input {
  width: 240px;
  height: 20px;
  box-sizing: border-box;
  background: #fff;
  border: 1px solid #777;
  border-radius: 3px;
}

.fd-browse {
  margin-left: 4px;
  width: 22px;
  height: 22px;
  box-sizing: border-box;
  border: 1px solid #999;
  border-radius: 3px;
  background: #e4e4e4;
  display: flex;
  align-items: center;
  justify-content: center;
}

.fd-sec-place {
  height: 38px;
  padding-top: 7px;
}

.fd-disabled {
  height: 23px;
  box-sizing: border-box;
  display: flex;
  align-items: center;
  justify-content: space-between;
  border: 1px solid #aaa;
  border-bottom-color: #eee;
  border-radius: 3px;
  color: #999;
  padding-left: 4px;
}

.fd-disabled-arrow {
  width: 16px;
  height: 21px;
  background: #dedede;
  position: relative;
}

.fd-disabled-arrow::after {
  content: "";
  position: absolute;
  left: 3px;
  top: 8px;
  border-left: 5px solid transparent;
  border-right: 5px solid transparent;
  border-top: 6px solid #aaa;
}

.fd-sec-name {
  height: 36px;
  padding-top: 6px;
}

.fd-name-input {
  height: 20px;
  box-sizing: border-box;
  border: 1px solid #aaa;
  border-bottom-color: #eee;
  border-radius: 3px;
}

.fd-sec-prev {
  height: 35px;
  display: flex;
  align-items: center;
  gap: 2px;
  padding-bottom: 4px;
}

.fd-check {
  width: 15px;
  height: 15px;
  box-sizing: border-box;
  border: 1px solid #567;
  border-radius: 2px;
  background: linear-gradient(#6cb0f0, #3a7ed0);
  position: relative;
}

.fd-check::after {
  content: "";
  position: absolute;
  left: 3px;
  top: 0;
  width: 6px;
  height: 10px;
  box-sizing: border-box;
  border-right: 2px solid #113;
  border-bottom: 2px solid #113;
  transform: rotate(40deg);
}

.fd-actions {
  margin-top: 11px;
  padding-top: 4px;
  border-top: 1px solid #ccc;
  display: flex;
  gap: 7px;
  justify-content: flex-end;
  padding-right: 5px;
}

.fd-btn {
  width: 52px;
  height: 21px;
  box-sizing: border-box;
  border: 1px solid #555;
  border-radius: 3px;
  background: linear-gradient(#fff, #ddd);
  text-align: center;
  line-height: 19px;
  font-family: "Noto Sans CJK SC", sans-serif;
}

.fd-btn--off {
  border-color: #aaa;
  color: #999;
}

.fd-foot {
  flex: none;
  height: 7px;
  margin-top: auto;
  margin-bottom: 1px;
  background: #1a1a1a;
  border-radius: 0 0 4px 4px;
}

/* RFI file dialog */
.rfi {
  position: absolute;
  left: 798px;
  top: 583px;
  width: 819px;
  height: 453px;
  box-sizing: border-box;
  background: #d4d0c8;
  border: 1px solid #777;
  border-top-color: #fff;
  border-left-color: #eee;
  padding: 2px 2px 0;
  display: flex;
  flex-direction: column;
  overflow: hidden;
  font-family: "Liberation Mono", "Noto Sans CJK SC", monospace;
  font-size: 10px;
}

.rfi-title {
  height: 20px;
  flex: none;
  display: flex;
  align-items: center;
  background: linear-gradient(90deg, #0a246a, #a6caf0);
  color: #fff;
  font-weight: 700;
  font-size: 11px;
}

.rfi-name {
  margin-left: 2px;
}

.rfi-close {
  margin-left: auto;
  margin-right: 3px;
  width: 16px;
  height: 15px;
  box-sizing: border-box;
  border: 1px solid;
  border-color: #fff #444 #444 #fff;
  background: #d4d0c8;
  color: #111;
  text-align: center;
  line-height: 13px;
  font-size: 11px;
}

.rfi-look {
  height: 34px;
  flex: none;
  display: flex;
  align-items: center;
  position: relative;
  box-sizing: border-box;
  padding-top: 7px;
}

.rfi-look-label {
  width: 99px;
  box-sizing: border-box;
  padding-left: 19px;
  white-space: nowrap;
  margin-top: -6px;
}

.rfi-combo {
  width: 260px;
  height: 24px;
  box-sizing: border-box;
  display: flex;
  align-items: center;
  gap: 1px;
  padding-left: 3px;
  background: #fff;
  border: 1px solid;
  border-color: #777 #fff #fff #777;
  position: relative;
}

.rfi-combo-btn {
  position: absolute;
  right: 0;
  top: 0;
  bottom: 0;
  width: 15px;
  background: #d4d0c8;
  border: 1px solid;
  border-color: #fff #444 #444 #fff;
  box-sizing: border-box;
}

.rfi-combo-btn::after,
.rfi-view-caret {
  content: "";
  border-left: 3px solid transparent;
  border-right: 3px solid transparent;
  border-top: 4px solid #111;
}

.rfi-combo-btn::after {
  position: absolute;
  left: 3px;
  top: 9px;
}

.rfi-t1 {
  margin-left: 17px;
}

.rfi-t2 {
  margin-left: 7px;
}

.rfi-view-caret {
  margin-left: 1px;
}

.rfi-main {
  flex: 1;
  display: flex;
  min-height: 0;
}

.rfi-side {
  margin-left: 7px;
  width: 87px;
  flex: none;
  box-sizing: border-box;
  background: #808080;
  border: 1px solid #444;
  border-right-color: #fff;
  border-bottom: none;
  display: flex;
  flex-direction: column;
  padding-top: 6px;
  font-family: "Noto Sans CJK SC", sans-serif;
  font-size: 12px;
  line-height: 12px;
  color: #fff;
}

.place {
  display: flex;
  flex-direction: column;
  align-items: center;
  text-align: center;
  height: 62px;
  flex: none;
}

.place span {
  width: 74px;
  margin-top: 1px;
}

.rfi-list {
  margin-left: 6px;
  width: 707px;
  flex: none;
  background: #fff;
  padding-top: 2px;
  box-sizing: border-box;
  border-top: 1px solid #d4d0c8;
  box-shadow: inset 0 3px #d4d0c8;
}

.list-head {
  display: flex;
  height: 16px;
  border-bottom: 1px solid #111;
  box-sizing: content-box;
}

.lh {
  display: flex;
  align-items: center;
  box-sizing: border-box;
  padding-left: 6px;
  background: #d4d0c8;
  border-left: 1px solid #fff;
  border-right: 1px solid #888;
}

.lh-name {
  width: 295px;
}

.lh-date {
  width: 130px;
}

.lh-type {
  width: 130px;
}

.lh-size {
  width: 87px;
}

.lh-rest {
  flex: 1;
}

.lh-btn {
  margin-left: auto;
  width: 11px;
  height: 15px;
  box-sizing: border-box;
  border-left: 1px solid #888;
  position: relative;
}

.lh-btn::after {
  content: "";
  position: absolute;
  left: 2px;
  top: 6px;
  border-left: 3px solid transparent;
  border-right: 3px solid transparent;
  border-top: 4px solid #111;
}

.lh-sort {
  margin-left: 10px;
  border-left: 4px solid transparent;
  border-right: 4px solid transparent;
  border-bottom: 5px solid #999;
}

.file-row {
  display: flex;
  height: 17px;
  align-items: center;
  padding-left: 8px;
}

.file-icon {
  margin-right: 0;
}

.file-cells {
  display: flex;
  width: 618px;
  height: 100%;
  align-items: center;
}

.file-cells--sel {
  background: #0a2463;
  color: #fff;
}

.fc-name {
  width: 277px;
  padding-left: 1px;
  box-sizing: border-box;
}

.fc-date,
.fc-type {
  width: 130px;
}

.fc-size {
  width: 81px;
  text-align: right;
  padding-right: 7px;
  box-sizing: border-box;
}
</style>
